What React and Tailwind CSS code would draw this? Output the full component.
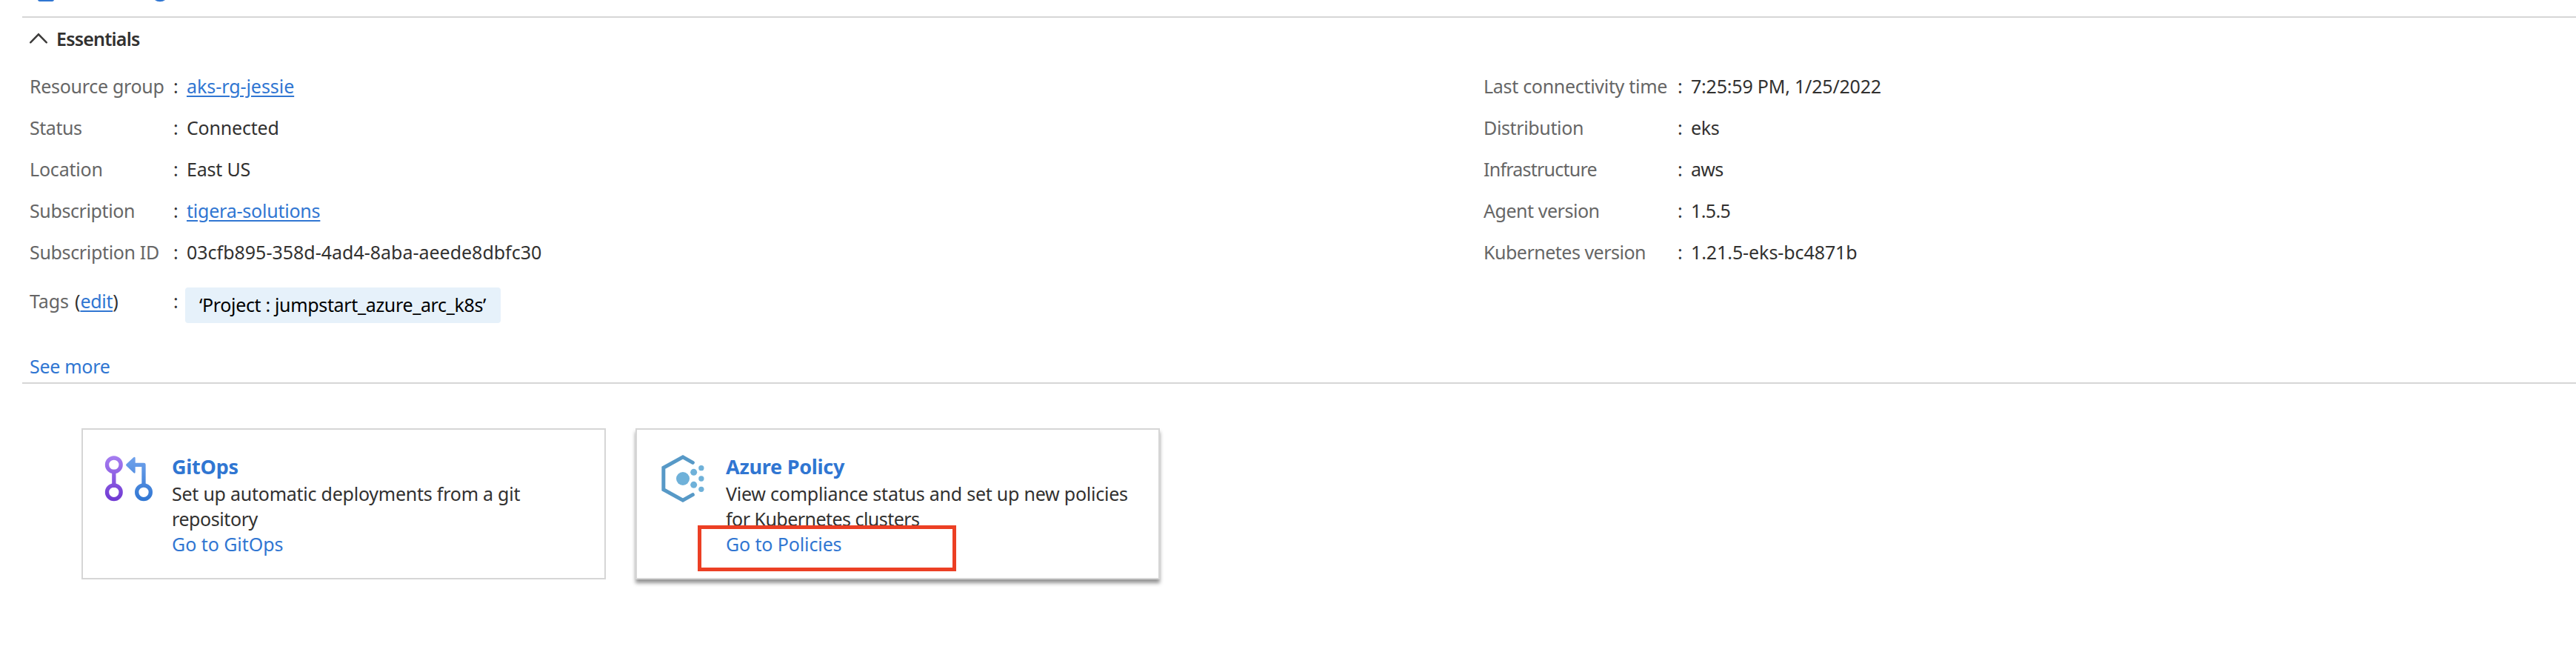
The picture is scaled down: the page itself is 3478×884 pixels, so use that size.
const link = "text-[#3076d2]";
const underlined = "text-[#3076d2] underline decoration-2 underline-offset-[3px]";

const leftRows = [
  { label: "Resource group", lt: "tracking-[-0.3px]", value: "aks-rg-jessie", vt: "tracking-[-0.06px]", linked: true },
  { label: "Status", lt: "tracking-[-0.45px]", value: "Connected", vt: "tracking-[-0.2px]" },
  { label: "Location", lt: "tracking-[-0.2px]", value: "East US", vt: "tracking-[-0.2px]" },
  { label: "Subscription", lt: "tracking-[-0.39px]", value: "tigera-solutions", vt: "tracking-[-0.22px]", linked: true },
  { label: "Subscription ID", lt: "tracking-[-0.34px]", value: "03cfb895-358d-4ad4-8aba-aeede8dbfc30", vt: "tracking-[-0.01px]" },
];

const rightRows = [
  { label: "Last connectivity time", lt: "tracking-[-0.3px]", value: "7:25:59 PM, 1/25/2022", vt: "tracking-[-0.2px]" },
  { label: "Distribution", lt: "tracking-[-0.36px]", value: "eks", vt: "tracking-[-0.4px]" },
  { label: "Infrastructure", lt: "tracking-[-0.76px]", value: "aws", vt: "tracking-[-0.7px]" },
  { label: "Agent version", lt: "tracking-[-0.46px]", value: "1.5.5", vt: "tracking-[-0.6px]" },
  { label: "Kubernetes version", lt: "tracking-[-0.5px]", value: "1.21.5-eks-bc4871b", vt: "tracking-[-0.08px]" },
];

function Row({ row, labelWidth }) {
  return (
    <div className="flex h-14 leading-[56px]">
      <dt className={`${labelWidth} ${row.lt} text-[#666666]`}>{row.label}</dt>
      <span className="w-[18px]">:</span>
      <dd className={row.vt}>
        {row.linked ? <a className={underlined}>{row.value}</a> : row.value}
      </dd>
    </div>
  );
}

function GitOpsIcon() {
  return (
    <svg className="h-[90px] w-[90px] shrink-0" viewBox="0 0 270 270" fill="none">
      <defs>
        <linearGradient id="purple" gradientUnits="userSpaceOnUse" x1="0" y1="46" x2="0" y2="229">
          <stop offset="0" stopColor="#a67ef0" />
          <stop offset="1" stopColor="#6f38d2" />
        </linearGradient>
        <linearGradient id="blue" gradientUnits="userSpaceOnUse" x1="0" y1="50" x2="0" y2="229">
          <stop offset="0" stopColor="#70a2ec" />
          <stop offset="1" stopColor="#3076d2" />
        </linearGradient>
      </defs>
      <g stroke="url(#purple)" strokeWidth="16">
        <circle cx="71.5" cy="82" r="28" />
        <circle cx="71.5" cy="193" r="28" />
        <path d="M71.5 109h.01V166h-.01z" />
      </g>
      <circle cx="192" cy="193" r="28" stroke="url(#blue)" strokeWidth="16" />
      <path
        fill="url(#blue)"
        d="M122 79 L151 52 Q158 47 158 55 V74 H193 Q200 74 200 81 V166 H184 V90 H158 V111 Q158 119 151 114 L122 86 Q118 82.500 122 79Z"
      />
    </svg>
  );
}

function PolicyIcon() {
  return (
    <svg className="h-[90px] w-[90px] shrink-0" viewBox="-6 0 270 270" fill="none">
      <path
        d="M166 73 L126 50.500 L47.500 94 V182 L126 225.500 L166 203"
        stroke="#5799c7"
        strokeWidth="15"
        strokeLinecap="round"
      />
      <g fill="#6fb1d9">
        <circle cx="126" cy="138" r="27" />
        <circle cx="170" cy="112" r="13.500" />
        <circle cx="170" cy="163" r="13.500" />
        <circle cx="200.500" cy="95" r="11" />
        <circle cx="200.500" cy="138" r="11" />
        <circle cx="200.500" cy="181" r="11" />
      </g>
    </svg>
  );
}

function Card({ icon, title, titleClass, children, className = "" }) {
  return (
    <section className={`relative flex h-[204px] w-[708px] border-2 border-[#d6d6d6] bg-white pl-[18px] ${className}`}>
      <div className="pt-5">{icon}</div>
      <div className="ml-3 whitespace-nowrap pt-[31px] leading-[34px]">
        <h3 className={`h-[38px] text-[27px] font-bold leading-[38px] text-[#3076d2] ${titleClass}`}>{title}</h3>
        {children}
      </div>
    </section>
  );
}

export default function App() {
  return (
    <div className="h-[884px] w-full overflow-hidden bg-white font-['Noto_Sans','Open_Sans',sans-serif] text-[25px] text-[#323130]">
      <svg className="block h-[22px] w-[300px]" viewBox="0 0 300 22" fill="#3076d2">
        <path d="M51 0H73Q72.500 2 70.500 2H53.500Q51.500 2 51 0Z" />
        <path d="M209 0H223Q220 2.300 216 2.300T209 0Z" />
      </svg>
      <div className="ml-[30px] h-[496px] border-y-2 border-[#d6d6d6] pl-[10px]">
        <div className="flex h-16 pt-[11px]">
          <svg className="mt-[7px] h-5 w-[26px]" viewBox="0 0 26 20" fill="none" stroke="#3b3a39" strokeWidth="2.400">
            <path d="M1.200 15.300 12 4.300 22.800 15.300" strokeLinecap="round" />
          </svg>
          <h2 className="ml-[10px] font-semibold leading-[34px] tracking-[-0.79px]">Essentials</h2>
        </div>
        <div className="flex whitespace-nowrap">
          <dl className="w-[1963px]">
            {leftRows.map((row) => (
              <Row key={row.label} row={row} labelWidth="w-[194px]" />
            ))}
            <div className="flex pt-5 leading-[48px]">
              <dt className="mt-[-6px] w-[194px] text-[#666666]">
                <span className="tracking-[-0.1px]">Tags</span>
                <span className="ml-2 text-[#323130]">(</span>
                <a className={`${underlined} tracking-[-0.31px]`}>edit</a>
                <span className="text-[#323130]">)</span>
              </dt>
              <span className="mt-[-6px] w-[16px]">:</span>
              <dd className="h-12 w-[426px] rounded-[4px] bg-[#e6f1fa] pl-[19px] leading-[46px] tracking-[-0.34px] text-black">
                ‘Project : jumpstart_azure_arc_k8s’
              </dd>
            </div>
          </dl>
          <dl>
            {rightRows.map((row) => (
              <Row key={row.label} row={row} labelWidth="w-[262px]" />
            ))}
          </dl>
        </div>
        <a className={`mt-[41px] block leading-[34px] tracking-[-0.3px] ${link}`}>See more</a>
      </div>
      <div className="ml-[110px] mt-[60px] flex gap-10">
        <Card icon={<GitOpsIcon />} title="GitOps" titleClass="tracking-[-0.25px]">
          <p className="tracking-[-0.24px]">Set up automatic deployments from a git</p>
          <p className="tracking-[-0.42px]">repository</p>
          <a className={`tracking-[-0.05px] ${link}`}>Go to GitOps</a>
        </Card>
        <Card
          icon={<PolicyIcon />}
          title="Azure Policy"
          titleClass="tracking-[-0.26px]"
          className="shadow-[0_5px_5px_rgba(0,0,0,0.42)]"
        >
          <p className="tracking-[-0.23px]">View compliance status and set up new policies</p>
          <p className="tracking-[-0.53px]">for Kubernetes clusters</p>
          <a className={`tracking-[-0.12px] ${link}`}>Go to Policies</a>
          <div className="absolute left-[82px] top-[129px] h-[62px] w-[349px] border-[5px] border-[#ec3f24]" />
        </Card>
      </div>
    </div>
  );
}
